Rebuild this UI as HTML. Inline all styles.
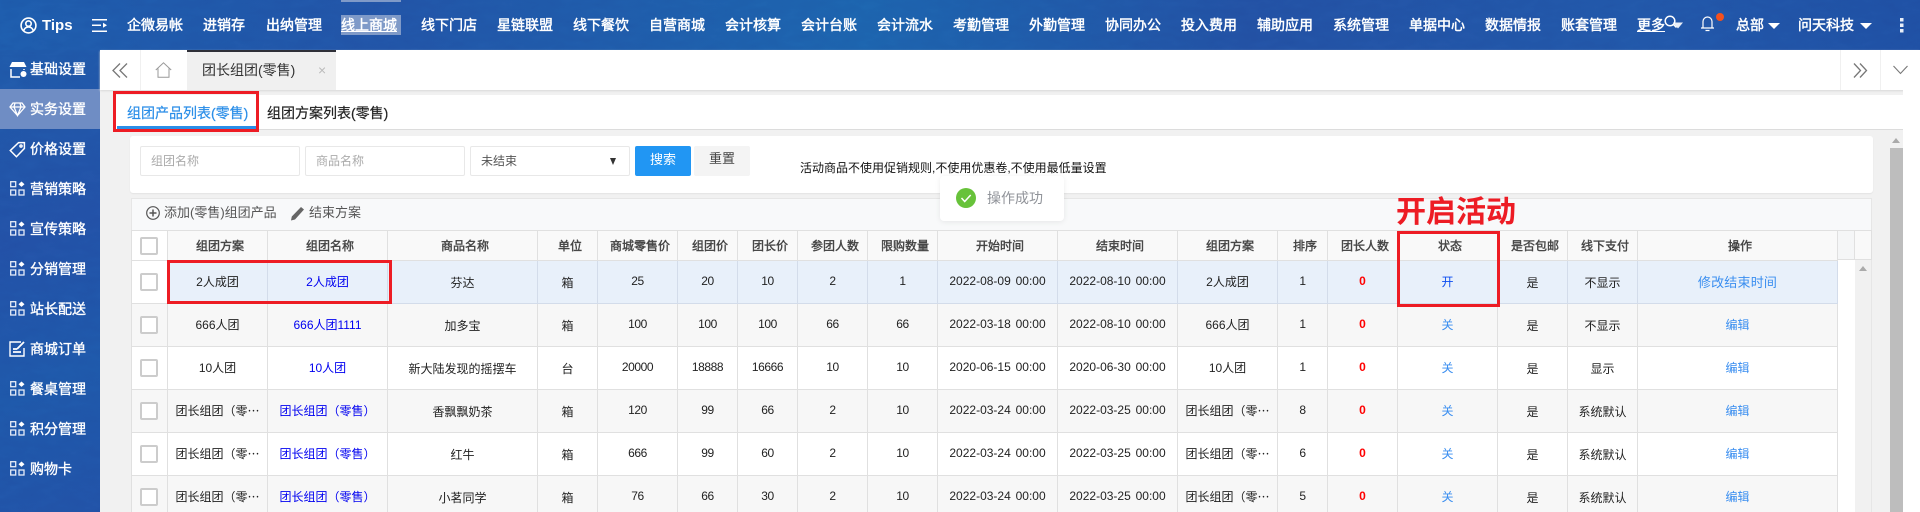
<!DOCTYPE html>
<html lang="zh-CN"><head><meta charset="utf-8"><title>团长组团(零售)</title>
<style>
*{box-sizing:border-box}
html,body{margin:0;padding:0;width:1920px;height:512px;overflow:hidden;background:#f1f1f1}
body{position:relative;font:12px "Liberation Sans","Noto Sans CJK SC",sans-serif;color:#333}
.a{position:absolute}
#top{left:0;top:0;width:1920px;height:50px;background:linear-gradient(90deg,#1d5aab 0,#2153a6 20%,#1c62ad 45%,#2250a3 65%,#2156a8 85%,#1f4fa3 100%)}
#side{left:0;top:50px;width:100px;height:462px;background:linear-gradient(160deg,#1f58a8 0,#2250a6 40%,#1e57a9 70%,#2151a6 100%)}
.tex{left:0;top:0;width:1920px;height:512px;pointer-events:none;opacity:.10;mix-blend-mode:overlay}
.nav{top:22px;height:20px;line-height:18px;font-size:14px;color:#fff;white-space:nowrap;-webkit-text-stroke:.45px #fff}
.sd{left:30px;height:20px;line-height:20px;font-size:14px;color:#fff;white-space:nowrap;-webkit-text-stroke:.35px #fff}
.si{left:10px;width:15px;height:15px}
.box{background:#fff;border:1px solid #e8e8e8;border-radius:2px}
.t{white-space:nowrap}
table{border-collapse:collapse;table-layout:fixed;position:absolute;left:131px;top:230px;width:1706px;background:#fff}
th,td{border:1px solid #e0e0e0;text-align:center;padding:0;overflow:hidden;white-space:nowrap;font-size:12px}
th{height:30px;background:#f9f9f9;font-weight:normal;color:#444;padding-left:5px;-webkit-text-stroke:.4px #444}
td{height:43px;color:#222}
tr.g td{background:#f7f7f7}
tr.h td{background:#e8f0fa;border-color:#d3dcea}
td.c,th.c{background:#fff!important;border-color:#e0e0e0!important;padding:0}
tr.g td.c{background:#f7f7f7!important}
td.n{letter-spacing:-.4px;padding-bottom:2px}
td.d{word-spacing:1.500px;padding-bottom:2px}
td.m{padding-bottom:2px}
td.l{color:#0000f0;padding-bottom:2px}
td.o{color:#3a8ef0;padding-bottom:2px}
td.r{color:#f00;font-weight:bold;padding-bottom:2px}
.cb{display:block;width:18px;height:18px;margin:0 auto 0 8px;border:2px solid #ccc;border-radius:2px;background:#fff}
.red{border:3px solid #ed1c24;pointer-events:none}
</style></head><body>

<div class="a" id="top"></div>
<div class="a" id="side"></div>
<svg class="a tex" width="1920" height="512"><filter id="n"><feTurbulence type="fractalNoise" baseFrequency=".05 .12" numOctaves="4"/><feColorMatrix type="saturate" values="0"/></filter><rect width="1920" height="50" filter="url(#n)"/><rect y="50" width="100" height="462" filter="url(#n)"/></svg>

<!-- top bar -->
<svg class="a" style="left:20px;top:17px" width="17" height="17" viewBox="0 0 17 17" fill="none" stroke="#fff" stroke-width="1.6"><circle cx="8.5" cy="8.5" r="7.4"/><circle cx="8.5" cy="6.6" r="2.7"/><path d="M3.6 14c.8-2.8 2.6-4 4.9-4s4.100 1.200 4.900 4"/></svg>
<div class="a t" style="left:42px;top:16px;font-size:15px;line-height:20px;font-weight:bold;color:#fff">Tips</div>
<svg class="a" style="left:92px;top:19px" width="15" height="13" viewBox="0 0 15 13" fill="#fff"><rect width="15" height="1.500"/><rect y="5.500" width="9" height="1.500"/><path d="M11 3.800l4 2.500-4 2.500z"/><rect y="11.500" width="15" height="1.500"/></svg>
<div class="a" style="left:341px;top:0;width:60px;height:2px;background:#7f9ac8"></div>
<div class="a" style="left:341px;top:15px;width:60px;height:20px;background:#7f9ac8"></div>
<div class="a nav" style="left:127px;top:16px">企微易帐</div>
<div class="a nav" style="left:203px;top:16px">进销存</div>
<div class="a nav" style="left:266px;top:16px">出纳管理</div>
<div class="a nav" style="left:341px;top:16px;text-decoration:underline">线上商城</div>
<div class="a nav" style="left:421px;top:16px">线下门店</div>
<div class="a nav" style="left:497px;top:16px">星链联盟</div>
<div class="a nav" style="left:573px;top:16px">线下餐饮</div>
<div class="a nav" style="left:649px;top:16px">自营商城</div>
<div class="a nav" style="left:725px;top:16px">会计核算</div>
<div class="a nav" style="left:801px;top:16px">会计台账</div>
<div class="a nav" style="left:877px;top:16px">会计流水</div>
<div class="a nav" style="left:953px;top:16px">考勤管理</div>
<div class="a nav" style="left:1029px;top:16px">外勤管理</div>
<div class="a nav" style="left:1105px;top:16px">协同办公</div>
<div class="a nav" style="left:1181px;top:16px">投入费用</div>
<div class="a nav" style="left:1257px;top:16px">辅助应用</div>
<div class="a nav" style="left:1333px;top:16px">系统管理</div>
<div class="a nav" style="left:1409px;top:16px">单据中心</div>
<div class="a nav" style="left:1485px;top:16px">数据情报</div>
<div class="a nav" style="left:1561px;top:16px">账套管理</div>
<div class="a nav" style="left:1637px;top:16px;text-decoration:underline">更多</div>
<svg class="a" style="left:1664px;top:15px" width="20" height="16" viewBox="0 0 20 16" fill="none"><circle cx="6" cy="6" r="4.800" stroke="#fff" stroke-width="1.500"/><path d="M9.500 9.500l3 3" stroke="#fff" stroke-width="1.500"/><path d="M9 7.500h10l-5 6z" fill="#fff" opacity=".9"/></svg>
<svg class="a" style="left:1700px;top:15px" width="15" height="17" viewBox="0 0 15 17" fill="none" stroke="#fff" stroke-width="1.200"><path d="M1 13h13M3 13V6.500a4.500 4.500 0 0 1 9 0V13M5.500 15.500h4"/></svg>
<div class="a" style="left:1716px;top:13px;width:8px;height:8px;border-radius:50%;background:#f4511e"></div>
<div class="a nav" style="left:1736px;top:16px">总部</div>
<div class="a" style="left:1768px;top:23px;border:6px solid transparent;border-top:6px solid #fff;border-bottom:0"></div>
<div class="a nav" style="left:1798px;top:16px">问天科技</div>
<div class="a" style="left:1860px;top:23px;border:6px solid transparent;border-top:6px solid #fff;border-bottom:0"></div>
<svg class="a" style="left:1900px;top:18px" width="4" height="15" fill="#e8eef8"><rect width="3.500" height="3.500" y="0"/><rect width="3.500" height="3.500" y="5.500"/><rect width="3.500" height="3.500" y="11"/></svg>

<!-- sidebar -->
<div class="a" style="left:0;top:89px;width:100px;height:40px;background:#6f8dc4"></div>
<svg class="a" style="top:61px;left:9px" width="18" height="17" viewBox="0 0 18 17" fill="#fff"><path d="M3 1h12l2.500 5h-17z"/><path d="M2 8v8h9M15 8v1" fill="none" stroke="#fff" stroke-width="1.500"/><circle cx="14.500" cy="13" r="3"/></svg>
<div class="a sd" style="top:59px">基础设置</div>
<svg class="a" style="top:101px;left:9px" width="17" height="16" viewBox="0 0 16 16" fill="none" stroke="#fff" stroke-width="1.300"><path d="M3.500 2h9L15.500 6 8 14.500.5 6zM.5 6h15M5.500 2L4.500 6 8 14.500 11.500 6l-1-4"/></svg>
<div class="a sd" style="top:99px">实务设置</div>
<svg class="a" style="top:141px;left:9px" width="17" height="17" viewBox="0 0 16 16" fill="none" stroke="#fff" stroke-width="1.400"><path d="M9 1.500h5.500V7L7 14.800 1.200 9z"/><circle cx="11.300" cy="4.700" r="1"/></svg>
<div class="a sd" style="top:139px">价格设置</div>
<svg class="a si" style="top:181px"><use href="#g"/></svg><div class="a sd" style="top:179px">营销策略</div>
<svg class="a si" style="top:221px"><use href="#g"/></svg><div class="a sd" style="top:219px">宣传策略</div>
<svg class="a si" style="top:261px"><use href="#g"/></svg><div class="a sd" style="top:259px">分销管理</div>
<svg class="a si" style="top:301px"><use href="#g"/></svg><div class="a sd" style="top:299px">站长配送</div>
<svg class="a" style="left:9px;top:341px" width="18" height="16" viewBox="0 0 18 16" fill="none" stroke="#fff" stroke-width="1.400"><path d="M12 1H1v14h14V7"/><path d="M4 11h8M4 8h4M8 8l7-7" stroke-width="1.800"/></svg>
<div class="a sd" style="top:339px">商城订单</div>
<svg class="a si" style="top:381px"><use href="#g"/></svg><div class="a sd" style="top:379px">餐桌管理</div>
<svg class="a si" style="top:421px"><use href="#g"/></svg><div class="a sd" style="top:419px">积分管理</div>
<svg class="a si" style="top:461px"><use href="#g"/></svg><div class="a sd" style="top:459px">购物卡</div>
<svg width="0" height="0" style="position:absolute"><defs><g id="g" fill="none" stroke="#e6ecf7" stroke-width="1.300"><rect x=".7" y=".7" width="5" height="5"/><rect x=".7" y="9" width="5" height="5"/><rect x="9" y="9" width="5" height="5"/><path d="M11.500 .5l3 2.700-3 2.700-3-2.700z" fill="#fff" stroke="none"/></g></defs></svg>

<!-- tab bar -->
<div class="a" style="left:100px;top:50px;width:1820px;height:40px;background:#fff;box-shadow:0 1px 2px #d8d8d8"></div>
<svg class="a" style="left:112px;top:63px" width="16" height="15" viewBox="0 0 16 15" fill="none" stroke="#777" stroke-width="1.300"><path d="M8 .5L1 7.500l7 7M15 .5L8 7.500l7 7"/></svg>
<div class="a" style="left:140px;top:50px;width:1px;height:40px;background:#f0f0f0"></div>
<svg class="a" style="left:155px;top:62px" width="17" height="16" viewBox="0 0 17 16" fill="none" stroke="#999" stroke-width="1"><path d="M.8 8L8.500 .8 16.200 8M3 6.500v8.800h11V6.500"/></svg>
<div class="a" style="left:187px;top:50px;width:149px;height:40px;background:#f0f0f0;border-top:2px solid #2f3038"></div>
<div class="a t" style="left:202px;top:60px;font-size:14px;line-height:20px;color:#333">团长组团(零售)</div>
<div class="a t" style="left:318px;top:60px;font-size:14px;line-height:20px;color:#bbb">×</div>
<div class="a" style="left:1840px;top:50px;width:1px;height:40px;background:#f0f0f0"></div>
<div class="a" style="left:1880px;top:50px;width:1px;height:40px;background:#f0f0f0"></div>
<svg class="a" style="left:1853px;top:63px" width="15" height="15" viewBox="0 0 15 15" fill="none" stroke="#777" stroke-width="1.300"><path d="M1 .5l6.500 7-6.500 7M7 .5l6.500 7-6.500 7"/></svg>
<svg class="a" style="left:1893px;top:65px" width="15" height="10" viewBox="0 0 15 10" fill="none" stroke="#777" stroke-width="1.100"><path d="M.5 1l7 7.500L14.500 1"/></svg>

<!-- sub tabs -->
<div class="a" style="left:113px;top:95px;width:1792px;height:35px;background:#fff;border-bottom:1px solid #dcdcdc"></div>
<div class="a t" style="left:127px;top:103px;font-size:14px;line-height:20px;color:#2a8ee8;-webkit-text-stroke:.2px #2a8ee8">组团产品列表(零售)</div>
<div class="a" style="left:117px;top:126px;width:139px;height:3px;background:#2a8ee8"></div>
<div class="a t" style="left:267px;top:103px;font-size:14px;line-height:20px;color:#222;-webkit-text-stroke:.2px #222">组团方案列表(零售)</div>
<div class="a red" style="left:113px;top:91px;width:146px;height:41px"></div>

<!-- filters -->
<div class="a" style="left:130px;top:136px;width:1743px;height:57px;background:#fff;border-radius:3px;box-shadow:0 1px 1px #e4e4e4"></div>
<div class="a box t" style="left:140px;top:146px;width:160px;height:30px;line-height:28px;padding-left:10px;color:#aaa">组团名称</div>
<div class="a box t" style="left:305px;top:146px;width:160px;height:30px;line-height:28px;padding-left:10px;color:#aaa">商品名称</div>
<div class="a box t" style="left:470px;top:146px;width:160px;height:30px;line-height:28px;padding-left:10px;color:#555">未结束</div>
<div class="a" style="left:610px;top:158px;border:3.500px solid transparent;border-top:7px solid #333;border-bottom:0"></div>
<div class="a t" style="left:635px;top:146px;width:56px;height:30px;line-height:28px;text-align:center;background:#2196f3;color:#fff;font-size:13px;border-radius:2px">搜索</div>
<div class="a t" style="left:694px;top:146px;width:56px;height:30px;line-height:26px;text-align:center;background:#f4f4f4;color:#444;font-size:13px;border-radius:2px">重置</div>
<div class="a t" style="left:800px;top:159px;line-height:18px;color:#111">活动商品不使用促销规则,不使用优惠卷,不使用最低量设置</div>

<!-- toolbar -->
<div class="a" style="left:131px;top:198px;width:1741px;height:33px;background:#f8f9fa;border:1px solid #e6e6e6;border-bottom:0"></div>
<svg class="a" style="left:146px;top:206px" width="14" height="14" viewBox="0 0 14 14" fill="none" stroke="#555" stroke-width="1.200"><circle cx="7" cy="7" r="6.300"/><path d="M7 3.500v7M3.500 7h7" stroke-width="1.500"/></svg>
<div class="a t" style="left:164px;top:203px;font-size:13px;line-height:20px;color:#555">添加(零售)组团产品</div>
<svg class="a" style="left:290px;top:206px" width="15" height="15" viewBox="0 0 15 15" fill="#666"><path d="M11 1l3 2.500L5 13.500 1 14.500l.8-4z"/></svg>
<div class="a t" style="left:309px;top:203px;font-size:13px;line-height:20px;color:#555">结束方案</div>

<!-- table -->
<div class="a" style="left:131px;top:230px;width:1741px;height:282px;background:#fff;border-left:1px solid #e0e0e0"></div>
<div class="a" style="left:1837px;top:230px;width:18px;height:30px;background:#f5f6f7;border:1px solid #e0e0e0"></div>
<div class="a" style="left:1855px;top:230px;width:17px;height:30px;background:#f9f9f9;border:1px solid #e0e0e0;border-left:0"></div>
<div class="a" style="left:1855px;top:260px;width:17px;height:252px;background:#f1f1f1;border-right:1px solid #e6e6e6"></div>
<div class="a" style="left:1859px;top:266px;border:4px solid transparent;border-bottom:5px solid #aaa;border-top:0"></div>

<table>
<colgroup><col style="width:36px"><col style="width:100px"><col style="width:120px"><col style="width:150px"><col style="width:60px"><col style="width:80px"><col style="width:60px"><col style="width:60px"><col style="width:70px"><col style="width:70px"><col style="width:120px"><col style="width:120px"><col style="width:100px"><col style="width:50px"><col style="width:70px"><col style="width:100px"><col style="width:70px"><col style="width:70px"><col style="width:200px"></colgroup>
<tr><th class="c"><span class="cb"></span></th><th>组团方案</th><th>组团名称</th><th>商品名称</th><th>单位</th><th>商城零售价</th><th>组团价</th><th>团长价</th><th>参团人数</th><th>限购数量</th><th>开始时间</th><th>结束时间</th><th>组团方案</th><th>排序</th><th>团长人数</th><th>状态</th><th>是否包邮</th><th>线下支付</th><th>操作</th></tr>
<tr class="h"><td class="c"><span class="cb"></span></td><td class="m">2人成团</td><td class="l">2人成团</td><td>芬达</td><td>箱</td><td class="n">25</td><td class="n">20</td><td class="n">10</td><td class="n">2</td><td class="n">1</td><td class="d">2022-08-09 00:00</td><td class="d">2022-08-10 00:00</td><td class="m">2人成团</td><td class="n">1</td><td class="r">0</td><td class="m" style="color:#0b4df0">开</td><td>是</td><td>不显示</td><td class="o" style="font-size:13px;letter-spacing:.2px">修改结束时间</td></tr>
<tr class="g"><td class="c"><span class="cb"></span></td><td class="m">666人团</td><td class="l">666人团1111</td><td>加多宝</td><td>箱</td><td class="n">100</td><td class="n">100</td><td class="n">100</td><td class="n">66</td><td class="n">66</td><td class="d">2022-03-18 00:00</td><td class="d">2022-08-10 00:00</td><td class="m">666人团</td><td class="n">1</td><td class="r">0</td><td class="o">关</td><td>是</td><td>不显示</td><td class="o">编辑</td></tr>
<tr><td class="c"><span class="cb"></span></td><td class="m">10人团</td><td class="l">10人团</td><td>新大陆发现的摇摆车</td><td>台</td><td class="n">20000</td><td class="n">18888</td><td class="n">16666</td><td class="n">10</td><td class="n">10</td><td class="d">2020-06-15 00:00</td><td class="d">2020-06-30 00:00</td><td class="m">10人团</td><td class="n">1</td><td class="r">0</td><td class="o">关</td><td>是</td><td>显示</td><td class="o">编辑</td></tr>
<tr class="g"><td class="c"><span class="cb"></span></td><td class="m">团长组团（零⋯</td><td class="l">团长组团（零售）</td><td>香飘飘奶茶</td><td>箱</td><td class="n">120</td><td class="n">99</td><td class="n">66</td><td class="n">2</td><td class="n">10</td><td class="d">2022-03-24 00:00</td><td class="d">2022-03-25 00:00</td><td class="m">团长组团（零⋯</td><td class="n">8</td><td class="r">0</td><td class="o">关</td><td>是</td><td>系统默认</td><td class="o">编辑</td></tr>
<tr><td class="c"><span class="cb"></span></td><td class="m">团长组团（零⋯</td><td class="l">团长组团（零售）</td><td>红牛</td><td>箱</td><td class="n">666</td><td class="n">99</td><td class="n">60</td><td class="n">2</td><td class="n">10</td><td class="d">2022-03-24 00:00</td><td class="d">2022-03-25 00:00</td><td class="m">团长组团（零⋯</td><td class="n">6</td><td class="r">0</td><td class="o">关</td><td>是</td><td>系统默认</td><td class="o">编辑</td></tr>
<tr class="g"><td class="c"><span class="cb"></span></td><td class="m">团长组团（零⋯</td><td class="l">团长组团（零售）</td><td>小茗同学</td><td>箱</td><td class="n">76</td><td class="n">66</td><td class="n">30</td><td class="n">2</td><td class="n">10</td><td class="d">2022-03-24 00:00</td><td class="d">2022-03-25 00:00</td><td class="m">团长组团（零⋯</td><td class="n">5</td><td class="r">0</td><td class="o">关</td><td>是</td><td>系统默认</td><td class="o">编辑</td></tr>
</table>

<div class="a red" style="left:167px;top:260px;width:225px;height:44px"></div>
<div class="a red" style="left:1397px;top:231px;width:103px;height:76px"></div>
<div class="a t" style="left:1396px;top:197px;font-size:30px;line-height:32px;font-weight:bold;color:#ed1c24">开启活动</div>

<!-- toast -->
<div class="a" style="left:940px;top:176px;width:124px;height:45px;background:#fff;border-radius:4px;box-shadow:0 1px 6px rgba(0,0,0,.08)"></div>
<svg class="a" style="left:956px;top:188px" width="20" height="20" viewBox="0 0 20 20"><circle cx="10" cy="10" r="10" fill="#67c23a"/><path d="M5.500 10l3.200 3.500 6-6.500" fill="none" stroke="#fff" stroke-width="1.500"/></svg>
<div class="a t" style="left:987px;top:188px;font-size:14px;line-height:20px;color:#909399">操作成功</div>

<!-- page scrollbar -->
<div class="a" style="left:1903px;top:90px;width:17px;height:422px;background:#fff"></div>
<div class="a" style="left:1890px;top:148px;width:13px;height:364px;background:#bdbdbd"></div>
<div class="a" style="left:1892px;top:138px;border:4.500px solid transparent;border-bottom:5px solid #aaa;border-top:0"></div>
</body></html>
